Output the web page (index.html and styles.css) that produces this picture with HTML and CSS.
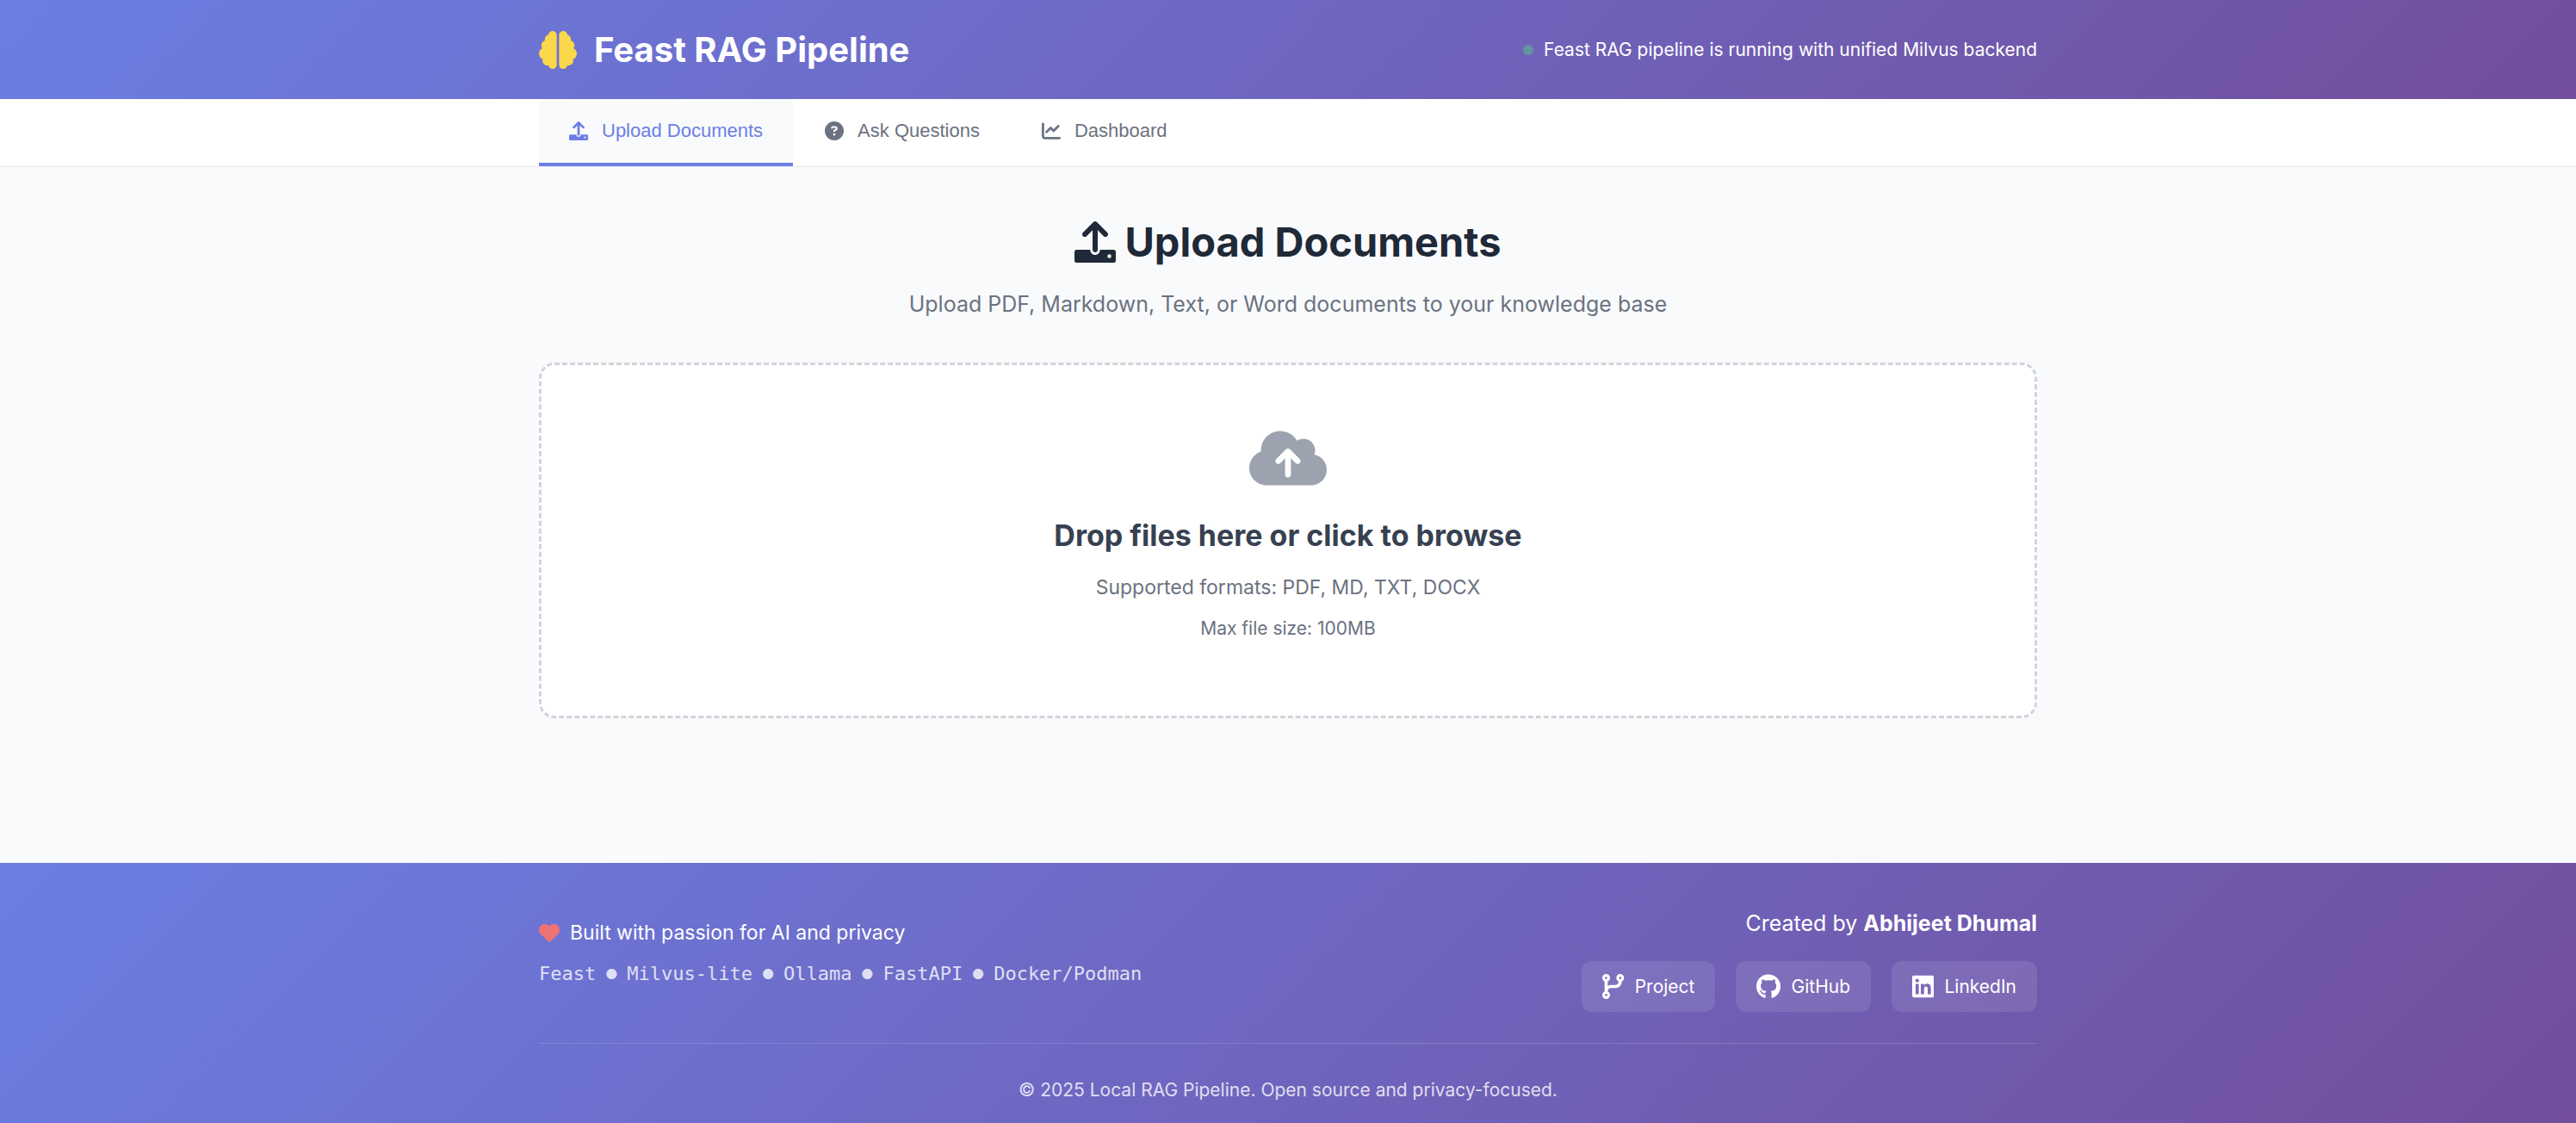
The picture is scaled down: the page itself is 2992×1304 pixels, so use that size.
FILE: index.html
```html
<!DOCTYPE html>
<html lang="en">
<head>
<meta charset="utf-8">
<meta name="viewport" content="width=device-width, initial-scale=1">
<title>Feast RAG Pipeline</title>
<link rel="stylesheet" href="styles.css">
</head>
<body>
<svg class="sprite" aria-hidden="true">
  <symbol id="upload" viewBox="0 0 512 512"><path fill-rule="evenodd" d="M288 109.3V352c0 17.7-14.3 32-32 32s-32-14.3-32-32V109.3l-73.4 73.4c-12.5 12.5-32.8 12.5-45.3 0s-12.5-32.8 0-45.3l128-128c12.5-12.5 32.8-12.5 45.3 0l128 128c12.5 12.5 12.5 32.8 0 45.3s-32.8 12.5-45.3 0L288 109.3zM30 352H195c0 35 27 64 61 64s61-29 61-64H482a30 30 0 0 1 30 30V482a30 30 0 0 1-30 30H30a30 30 0 0 1-30-30V382a30 30 0 0 1 30-30zM432 456a24 24 0 1 0 0-48 24 24 0 1 0 0 48z"/></symbol>
</svg>
<header class="header">
  <div class="container header-row">
    <div class="brand">
      <svg class="brand-icon" viewBox="0 0 512 512" aria-hidden="true"><path d="M184 0c30.9 0 56 25.1 56 56V456c0 30.9-25.1 56-56 56c-28.9 0-52.7-21.9-55.7-50.1c-5.2 1.4-10.7 2.1-16.3 2.1c-35.3 0-64-28.7-64-64c0-7.4 1.3-14.6 3.6-21.2C21.4 367.4 0 338.2 0 304c0-31.9 18.7-59.5 45.8-72.3C37.1 220.8 32 207 32 192c0-30.7 21.6-56.3 50.4-62.6C80.8 123.9 80 118 80 112c0-29.9 20.6-55.1 48.3-62.1C131.3 21.9 155.1 0 184 0zM328 0c28.9 0 52.6 21.9 55.7 49.9c27.8 7 48.3 32.1 48.3 62.1c0 6-.8 11.9-2.4 17.4c28.8 6.2 50.4 31.9 50.4 62.6c0 15-5.1 28.8-13.8 39.7C493.3 244.5 512 272.1 512 304c0 34.2-21.4 63.4-51.6 74.8c2.3 6.6 3.6 13.8 3.6 21.2c0 35.3-28.7 64-64 64c-5.6 0-11.1-.7-16.3-2.1c-3 28.2-26.8 50.1-55.7 50.1c-30.9 0-56-25.1-56-56V56c0-30.9 25.1-56 56-56z"/></svg>
      <h1 class="brand-name">Feast RAG Pipeline</h1>
    </div>
    <div class="status"><span class="status-dot"></span><span>Feast RAG pipeline is running with unified Milvus backend</span></div>
  </div>
</header>
<nav class="nav">
  <div class="container tabs">
    <button class="tab tab-active" type="button"><svg class="tab-icon" aria-hidden="true"><use href="#upload"/></svg>Upload Documents</button>
    <button class="tab" type="button"><svg class="tab-icon" viewBox="0 0 512 512" aria-hidden="true"><path d="M256 512A256 256 0 1 0 256 0a256 256 0 1 0 0 512zM169.8 165.3c7.9-22.3 29.1-37.3 52.8-37.3h58.3c34.9 0 63.1 28.3 63.1 63.1c0 22.6-12.1 43.5-31.7 54.8L280 264.4c-.2 13-10.9 23.6-24 23.6c-13.3 0-24-10.7-24-24V250.5c0-8.6 4.6-16.5 12.1-20.8l44.3-25.4c4.7-2.7 7.6-7.7 7.6-13.1c0-8.4-6.8-15.1-15.1-15.1H222.6c-3.4 0-6.4 2.1-7.5 5.3l-.4 1.2c-4.4 12.5-18.2 19-30.6 14.6s-19-18.2-14.6-30.6l.4-1.2zM224 352a32 32 0 1 1 64 0 32 32 0 1 1-64 0z"/></svg>Ask Questions</button>
    <button class="tab" type="button"><svg class="tab-icon" viewBox="0 0 512 512" aria-hidden="true"><path d="M64 64c0-17.7-14.3-32-32-32S0 46.3 0 64V400c0 44.2 35.8 80 80 80H480c17.7 0 32-14.3 32-32s-14.3-32-32-32H80c-8.800 0-16-7.200-16-16V64zm406.600 86.600c12.500-12.500 12.500-32.800 0-45.300s-32.800-12.500-45.300 0L320 210.700l-57.400-57.400c-12.500-12.500-32.800-12.500-45.300 0l-112 112c-12.500 12.500-12.500 32.800 0 45.300s32.800 12.500 45.300 0L240 221.300l57.400 57.400c12.500 12.500 32.800 12.500 45.300 0l128-128z"/></svg>Dashboard</button>
  </div>
</nav>
<main class="main container">
  <h2 class="page-title"><svg class="title-icon" aria-hidden="true"><use href="#upload"/></svg>Upload Documents</h2>
  <p class="page-subtitle">Upload PDF, Markdown, Text, or Word documents to your knowledge base</p>
  <button class="dropzone" type="button">
    <svg class="cloud" viewBox="0 0 640 512" aria-hidden="true"><path d="M144 480C64.500 480 0 415.500 0 336c0-62.800 40.200-116.200 96.200-135.900c-.1-2.700-.2-5.400-.2-8.100c0-88.400 71.600-160 160-160c59.300 0 111 32.200 138.700 80.200C409.900 102 428.300 96 448 96c53 0 96 43 96 96c0 12.200-2.300 23.800-6.400 34.600C596 238.400 640 290.100 640 352c0 70.700-57.300 128-128 128H144zm79-217c-9.400 9.400-9.400 24.600 0 33.900s24.600 9.400 33.900 0l39-39V392c0 13.300 10.700 24 24 24s24-10.700 24-24V257.900l39 39c9.400 9.400 24.600 9.400 33.900 0s9.400-24.600 0-33.900l-80-80c-9.400-9.400-24.600-9.400-33.900 0l-80 80z"/></svg>
    <span class="drop-title">Drop files here or click to browse</span>
    <span class="drop-formats">Supported formats: PDF, MD, TXT, DOCX</span>
    <span class="drop-size">Max file size: 100MB</span>
  </button>
</main>
<footer class="footer">
  <div class="container">
    <div class="footer-row">
      <div class="footer-info">
        <p class="passion"><svg class="heart" viewBox="0 0 512 512" aria-hidden="true"><path d="M47.6 300.4L228.3 469.1c7.5 7 17.4 10.9 27.7 10.9s20.2-3.9 27.700-10.900L464.400 300.400c30.400-28.300 47.600-68 47.600-109.500v-5.800c0-69.900-50.500-129.500-119.400-141C347 36.500 300.600 51.400 268 84L256 96 244 84c-32.600-32.600-79-47.500-124.600-39.900C50.500 55.600 0 115.200 0 185.100v5.800c0 41.500 17.200 81.200 47.600 109.500z"/></svg>Built with passion for AI and privacy</p>
        <p class="stack"><span>Feast</span><span class="bullet">●</span><span>Milvus-lite</span><span class="bullet">●</span><span>Ollama</span><span class="bullet">●</span><span>FastAPI</span><span class="bullet">●</span><span>Docker/Podman</span></p>
      </div>
      <div class="footer-author">
        <p class="author">Created by <strong>Abhijeet Dhumal</strong></p>
        <div class="links">
          <a class="link" href="#project"><svg class="link-icon" viewBox="0 0 448 512" aria-hidden="true"><path fill-rule="evenodd" d="M160 80c0 32.800-19.700 61-48 73.300v87.800c18.800-10.900 40.700-17.100 64-17.100h96c35.300 0 64-28.700 64-64v-6.700C307.700 141 288 112.800 288 80c0-44.200 35.800-80 80-80s80 35.800 80 80c0 32.800-19.700 61-48 73.300V160c0 70.700-57.300 128-128 128H176c-35.300 0-64 28.700-64 64v6.700c28.300 12.300 48 40.500 48 73.300c0 44.200-35.800 80-80 80s-80-35.800-80-80c0-32.800 19.700-61 48-73.300V352 153.300C19.700 141 0 112.800 0 80C0 35.800 35.800 0 80 0s80 35.800 80 80zM80 104a24 24 0 1 0 0-48 24 24 0 1 0 0 48zM368 104a24 24 0 1 0 0-48 24 24 0 1 0 0 48zM80 456a24 24 0 1 0 0-48 24 24 0 1 0 0 48z"/></svg>Project</a>
          <a class="link" href="#github"><svg class="link-icon" viewBox="0 0 496 512" aria-hidden="true"><path d="M165.900 397.400c0 2-2.300 3.600-5.200 3.600-3.300.3-5.600-1.300-5.600-3.600 0-2 2.300-3.600 5.200-3.600 3-.3 5.600 1.300 5.600 3.600zm-31.100-4.500c-.7 2 1.300 4.300 4.300 4.900 2.600 1 5.600 0 6.200-2s-1.300-4.300-4.300-5.200c-2.600-.7-5.500.3-6.200 2.300zm44.200-1.700c-2.900.7-4.900 2.600-4.600 4.900.3 2 2.900 3.300 5.900 2.600 2.900-.7 4.900-2.600 4.600-4.600-.3-1.900-3-3.200-5.900-2.900zM244.800 8C106.100 8 0 113.300 0 252c0 110.900 69.800 205.800 169.500 239.200 12.800 2.300 17.300-5.600 17.300-12.100 0-6.200-.3-40.400-.3-61.400 0 0-70 15-84.700-29.800 0 0-11.400-29.100-27.800-36.600 0 0-22.900-15.700 1.600-15.400 0 0 24.900 2 38.600 25.800 21.900 38.600 58.600 27.500 72.900 20.900 2.300-16 8.800-27.100 16-33.700-55.900-6.200-112.300-14.300-112.300-110.500 0-27.500 7.600-41.300 23.600-58.900-2.600-6.500-11.100-33.300 2.600-67.900 20.900-6.500 69 27 69 27 20-5.600 41.500-8.500 62.800-8.500s42.800 2.900 62.800 8.500c0 0 48.100-33.600 69-27 13.700 34.700 5.200 61.400 2.600 67.900 16 17.700 25.800 31.500 25.800 58.900 0 96.500-58.900 104.200-114.800 110.500 9.200 7.900 17 22.900 17 46.400 0 33.700-.3 75.400-.3 83.600 0 6.500 4.600 14.400 17.300 12.100C428.200 457.800 496 362.900 496 252 496 113.300 383.500 8 244.800 8z"/></svg>GitHub</a>
          <a class="link" href="#linkedin"><svg class="link-icon" viewBox="0 0 448 512" aria-hidden="true"><path d="M416 32H31.900C14.300 32 0 46.500 0 64.300v383.400C0 465.500 14.300 480 31.900 480H416c17.600 0 32-14.500 32-32.300V64.300c0-17.800-14.400-32.300-32-32.300zM135.400 416H69V202.200h66.500V416zm-33.200-243c-21.300 0-38.500-17.300-38.500-38.500S80.900 96 102.200 96c21.200 0 38.500 17.300 38.500 38.500 0 21.300-17.200 38.500-38.500 38.500zm282.100 243h-66.400V312c0-24.800-.5-56.700-34.500-56.700-34.600 0-39.900 27-39.900 54.900V416h-66.400V202.200h63.700v29.200h.9c8.900-16.800 30.600-34.500 62.200-34.500 66.500 0 78.900 43.800 78.900 100.900V416z"/></svg>LinkedIn</a>
        </div>
      </div>
    </div>
    <p class="copyright">© 2025 Local RAG Pipeline. Open source and privacy-focused.</p>
  </div>
</footer>
</body>
</html>
```
FILE: styles.css
```css
* {
  box-sizing: border-box;
  margin: 0;
  padding: 0;
}

body {
  display: flex;
  flex-direction: column;
  min-height: 100vh;
  background: #f9fafc;
  color: #1f2937;
  font-family: Inter, "Liberation Sans", sans-serif;
  font-size: 21px;
  line-height: 32px;
}

svg {
  flex: none;
  fill: currentColor;
}

.sprite {
  position: absolute;
  width: 0;
  height: 0;
}

.container {
  width: 100%;
  max-width: 1740px;
  margin: 0 auto;
}

.header,
.footer {
  background: linear-gradient(135deg, #6b7ee3 0%, #724e9c 100%);
  color: #fff;
}

.header-row {
  display: flex;
  align-items: center;
  justify-content: space-between;
  min-height: 115px;
}

.brand {
  display: flex;
  align-items: center;
  gap: 20px;
}

.brand-icon {
  width: 44px;
  height: 44px;
  color: #fbd84b;
}

.brand-name {
  font-size: 40px;
  font-weight: 700;
  line-height: 60px;
}

.status {
  display: flex;
  align-items: center;
  gap: 12px;
}

.status-dot {
  width: 12px;
  height: 12px;
  border-radius: 50%;
  background: #6295a0;
}

.nav {
  background: #fff;
  border-bottom: 1px solid #e5e7eb;
}

.tabs {
  display: flex;
  gap: 2px;
}

.tab {
  display: flex;
  align-items: center;
  gap: 16px;
  height: 78px;
  padding: 0 35px;
  border: 0;
  border-bottom: 4px solid transparent;
  background: none;
  color: #6b7280;
  font-family: "Liberation Sans", Arial, sans-serif;
  font-size: 22px;
  cursor: pointer;
}

.tab-active {
  border-bottom-color: #6b7ee3;
  background: #f9fafc;
  color: #6b7ee3;
}

.tab-icon {
  width: 22px;
  height: 22px;
}

.main {
  flex: 1;
  padding-top: 55px;
  text-align: center;
}

.page-title {
  display: flex;
  align-items: center;
  justify-content: center;
  gap: 10px;
  font-size: 47px;
  font-weight: 700;
  line-height: 64px;
}

.title-icon {
  width: 48px;
  height: 48px;
}

.page-subtitle {
  margin-top: 20px;
  color: #6b7280;
  font-size: 25px;
  line-height: 40px;
}

.dropzone {
  display: flex;
  flex-direction: column;
  align-items: center;
  width: 100%;
  margin-top: 48px;
  padding: 72px 72px 85px;
  border: 3px dashed #d1d5db;
  border-radius: 18px;
  background: #fff;
  color: #6b7280;
  font-family: inherit;
  font-size: 21px;
  line-height: 32px;
  cursor: pointer;
}

.cloud {
  width: 90px;
  height: 72px;
  color: #9ca3af;
}

.drop-title {
  margin-top: 28px;
  color: #374151;
  font-size: 34px;
  font-weight: 700;
  line-height: 52px;
}

.drop-formats {
  margin-top: 16px;
  font-size: 23px;
  line-height: 36px;
}

.drop-size {
  margin-top: 14px;
}

.footer {
  padding: 46px 0 22px;
}

.footer-row {
  display: flex;
  align-items: center;
  justify-content: space-between;
  padding-bottom: 36px;
  border-bottom: 1px solid rgba(255, 255, 255, 0.15);
}

.footer-info {
  display: flex;
  flex-direction: column;
  gap: 16px;
  padding-bottom: 10px;
}

.passion {
  display: flex;
  align-items: center;
  gap: 12px;
  font-size: 23px;
}

.heart {
  width: 24px;
  height: 24px;
  color: #ef7373;
}

.stack {
  display: flex;
  gap: 12px;
  color: rgba(255, 255, 255, 0.8);
  font-family: "DejaVu Sans Mono", monospace;
  font-size: 22px;
}

.bullet {
  display: flex;
  justify-content: center;
  width: 12px;
  font-family: Inter, sans-serif;
  font-size: 16px;
}

.footer-author {
  display: flex;
  flex-direction: column;
  align-items: flex-end;
  gap: 20px;
}

.author {
  font-size: 25px;
  line-height: 48px;
}

.author strong {
  font-weight: 700;
}

.links {
  display: flex;
  gap: 24px;
}

.link {
  display: flex;
  align-items: center;
  gap: 12px;
  height: 59px;
  padding: 0 24px;
  border-radius: 12px;
  background: rgba(255, 255, 255, 0.1);
  color: #fff;
  text-decoration: none;
}

.link-icon {
  height: 29px;
}

.copyright {
  padding-top: 38px;
  color: rgba(255, 255, 255, 0.8);
  text-align: center;
}
```
